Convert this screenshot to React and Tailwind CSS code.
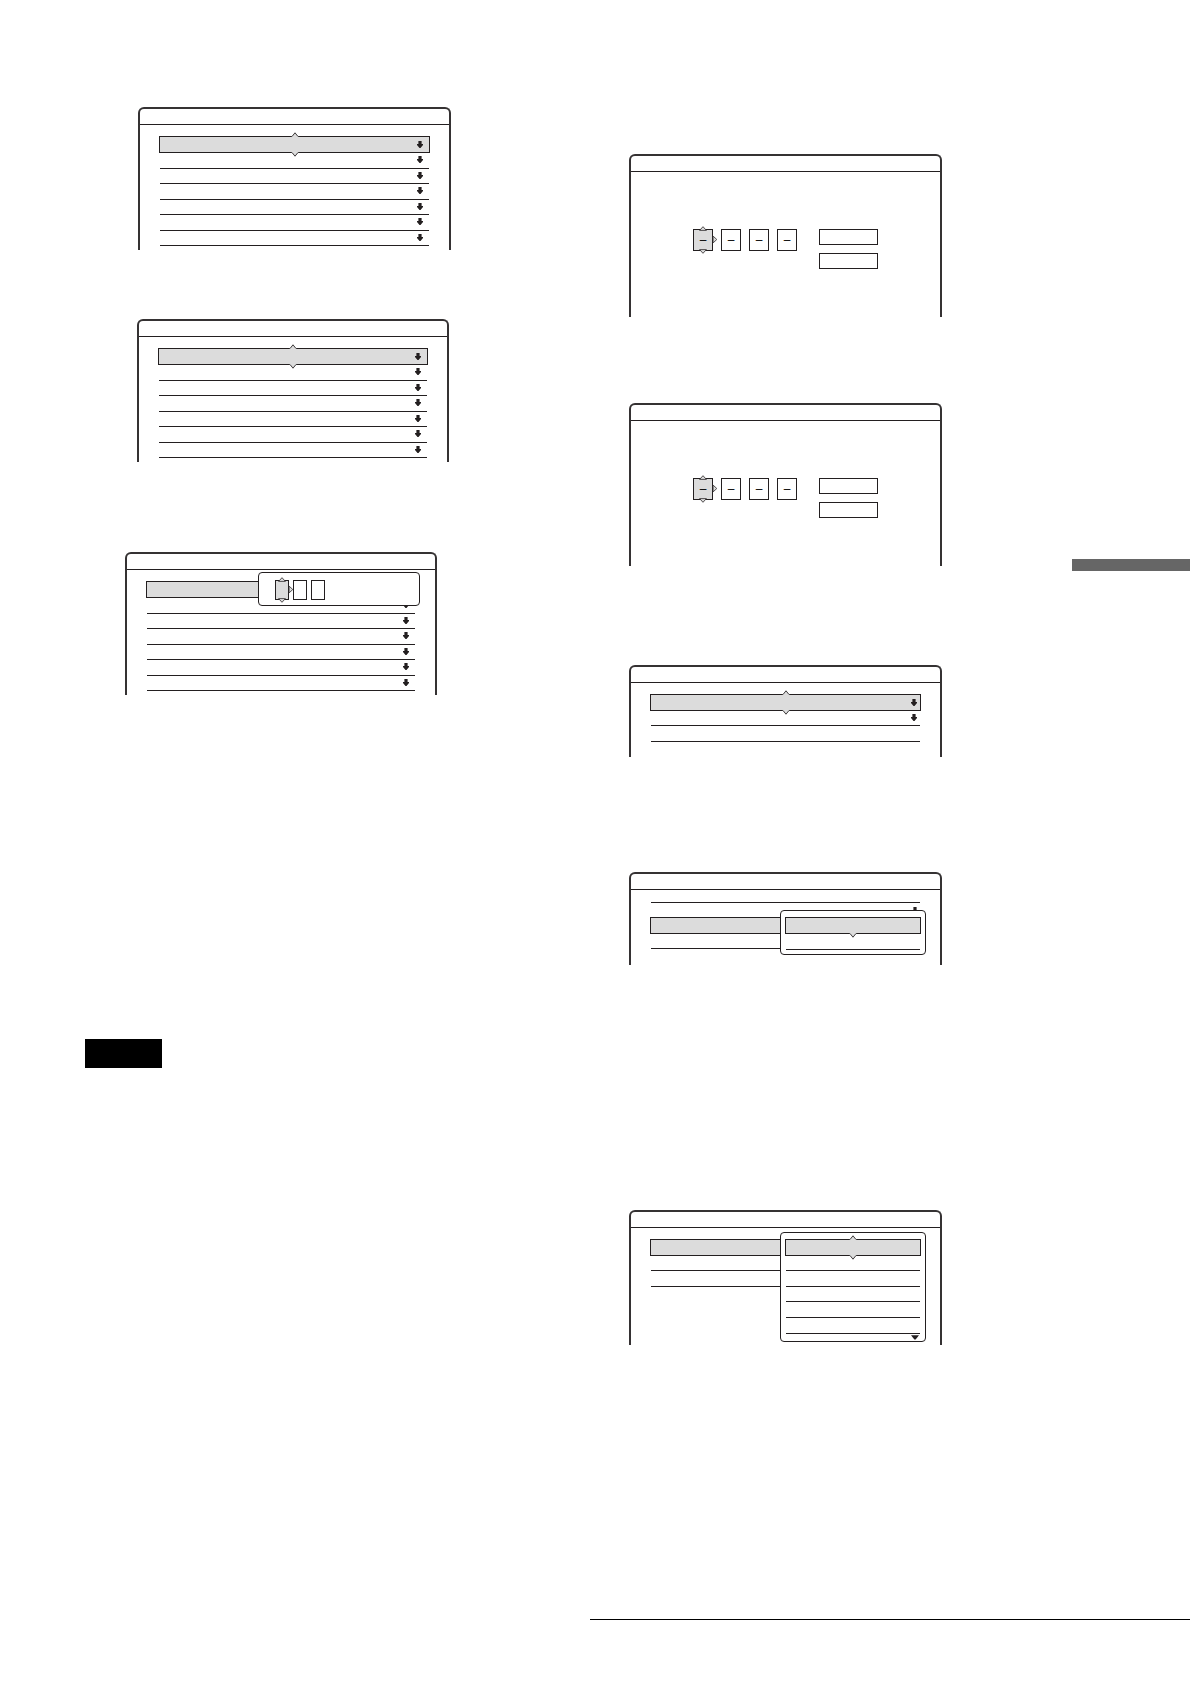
import React from 'react';
import clsx from 'clsx';

const DownArrow = () => (
  <svg width="6" height="7" viewBox="0 0 6 7" className="shrink-0" aria-hidden="true">
    <path d="M1.4 0H4.6V3H6V4L3.5 7H2.5L0 4V3H1.4Z" fill="#231f20" />
  </svg>
);

// small pointer that opens out of the border of a selected item
const Pointer = ({ className }) => (
  <svg width="8" height="5" viewBox="0 0 8 5" className={clsx('absolute', className)} aria-hidden="true">
    <path d="M1 5V4L4 0.6L7 4V5Z" fill="#dcdcdc" />
    <path d="M0 4.5H1L4 0.8L7 4.5H8" fill="none" stroke="#3f3c3d" strokeWidth="1" />
  </svg>
);

// closed triangle used around the active digit
const Triangle = ({ className }) => (
  <svg width="8" height="5" viewBox="0 0 8 5" className={clsx('absolute', className)} aria-hidden="true">
    <path d="M0.6 4.4L4 0.7L7.4 4.4Z" fill="#dcdcdc" stroke="#3f3c3d" strokeWidth="0.9" />
  </svg>
);

const Panel = ({ className, children }) => (
  <section className={clsx('relative rounded-t-md border-2 border-b-0 border-[#353233]', className)}>
    <header className="h-4 border-b border-[#231f20]" />
    {children}
  </section>
);

const Selected = ({ up, down, arrow, className }) => (
  <li className={clsx('relative flex h-[17px] items-center justify-end border border-[#231f20] bg-[#dcdcdc]', className)}>
    {up && <Pointer className="-top-[5px] left-1/2 -ml-1" />}
    {down && <Pointer className="-bottom-[5px] left-1/2 -ml-1 rotate-180" />}
    {arrow && <DownArrow />}
  </li>
);

const Row = ({ arrow, className }) => (
  <li className={clsx('mx-px flex items-start justify-end border-b border-[#231f20] pt-[3px]', className)}>
    {arrow && <DownArrow />}
  </li>
);

const ArrowRows = () => (
  <>
    <Row arrow className="h-4 pr-1.5" />
    <Row arrow className="h-[15px] pr-1.5" />
    <Row arrow className="h-4 pr-1.5" />
    <Row arrow className="h-[15px] pr-1.5" />
    <Row arrow className="h-4 pr-1.5" />
    <Row arrow className="h-[15px] pr-1.5" />
  </>
);

const Digit = ({ active, value, label, className }) => (
  <div className={clsx('relative', className)}>
    <input
      type="text"
      readOnly
      defaultValue={value}
      aria-label={label}
      className={clsx(
        'block h-full w-full border border-[#231f20] p-0 text-center font-["Liberation_Sans",sans-serif] text-xs text-black outline-none',
        active ? 'bg-[#dcdcdc]' : 'bg-white'
      )}
    />
    {active && (
      <>
        <Triangle className="-top-[3px] left-1/2 -ml-1" />
        <Triangle className="-bottom-[3px] left-1/2 -ml-1 rotate-180" />
        <Triangle className="-right-[6px] top-1/2 -mt-[3px] rotate-90" />
      </>
    )}
  </div>
);

const CodePanel = ({ className }) => (
  <Panel className={clsx('h-[163px] w-[313px]', className)}>
    <div className="flex items-start pl-[62px] pt-[57px]">
      <div className="flex gap-2">
        {[1, 2, 3, 4].map((n) => (
          <Digit key={n} active={n === 1} value="–" label={`Digit ${n}`} className="h-[22px] w-5" />
        ))}
      </div>
      <div className="ml-[22px] flex flex-col gap-2">
        <button type="button" aria-label="First option" className="h-4 w-[59px] border border-[#231f20] bg-white" />
        <button type="button" aria-label="Second option" className="h-4 w-[59px] border border-[#231f20] bg-white" />
      </div>
    </div>
  </Panel>
);

const Popup = ({ className, children }) => (
  <div className={clsx('absolute rounded border border-[#231f20] bg-white', className)}>{children}</div>
);

const App = () => {
  return (
    <div className="bg-white pb-[62px]">
      <main className="grid grid-cols-[590fr_482fr_118fr]">
        <div className="flex flex-col items-start pl-[85px] pt-[107px]">
          <Panel className="ml-[53px] h-[143px] w-[313px]">
            <ul className="px-[19px] pt-[11px]">
              <Selected up down arrow className="pr-1.5" />
              <ArrowRows />
            </ul>
          </Panel>

          <Panel className="ml-[52px] mt-[69px] h-[143px] w-[312px]">
            <ul className="px-[19px] pt-[11px]">
              <Selected up down arrow className="pr-1.5" />
              <ArrowRows />
            </ul>
          </Panel>

          <Panel className="ml-10 mt-[90px] h-[143px] w-[312px]">
            <ul className="px-[19px] pt-[11px]">
              <Selected />
              <ArrowRows />
            </ul>
            <Popup className="right-[15px] top-[18px] flex h-[34px] w-[162px] gap-1 pl-4 pt-[7px]">
              <Digit active label="Hundreds" className="h-5 w-[14px]" />
              <Digit label="Tens" className="h-5 w-[14px]" />
              <Digit label="Units" className="h-5 w-[14px]" />
            </Popup>
          </Panel>

          <div className="mt-[344px] h-[29px] w-[77px] bg-black" />
        </div>

        <div className="flex flex-col items-start pl-[39px] pt-[154px]">
          <CodePanel />
          <CodePanel className="mt-[86px]" />

          <Panel className="mt-[99px] h-[92px] w-[313px]">
            <ul className="px-[19px] pt-[11px]">
              <Selected up down arrow className="pr-[3px]" />
              <Row arrow className="h-[15px] pr-[3px]" />
              <Row className="h-4" />
            </ul>
          </Panel>

          <Panel className="mt-[115px] h-[93px] w-[313px]">
            <ul className="px-[19px] pt-[11px]">
              <li className="mx-px h-0.5 border-b border-[#231f20]" />
              <li className="flex h-[14px] justify-end pr-[3px] pt-1">
                <DownArrow />
              </li>
              <Selected />
              <Row className="h-[15px]" />
            </ul>
            <Popup className="right-[14px] top-[36px] h-[45px] w-[146px]">
              <ul className="px-1 pt-1.5">
                <Selected down />
                <Row className="h-4" />
              </ul>
            </Popup>
          </Panel>

          <Panel className="mt-[245px] h-[135px] w-[313px]">
            <ul className="px-[19px] pt-[11px]">
              <Selected />
              <Row className="h-[15px]" />
              <Row className="h-4" />
            </ul>
            <Popup className="right-[14px] top-5 h-[110px] w-[146px]">
              <ul className="px-1 pt-1.5">
                <Selected up down />
                <Row className="h-[15px]" />
                <Row className="h-4" />
                <Row className="h-[15px]" />
                <Row className="h-4" />
                <Row className="h-4" />
              </ul>
              <svg width="8" height="5" viewBox="0 0 8 5" className="ml-auto mr-1.5 mt-px" aria-hidden="true">
                <path d="M0 0.3H8L4.6 4.4H3.4Z" fill="#231f20" />
              </svg>
            </Popup>
          </Panel>
        </div>

        <div className="mt-[559px] h-3 bg-[#666]" />

        <footer className="col-span-2 col-start-2 mt-[274px] h-px bg-black" />
      </main>
    </div>
  );
};

export default App;
